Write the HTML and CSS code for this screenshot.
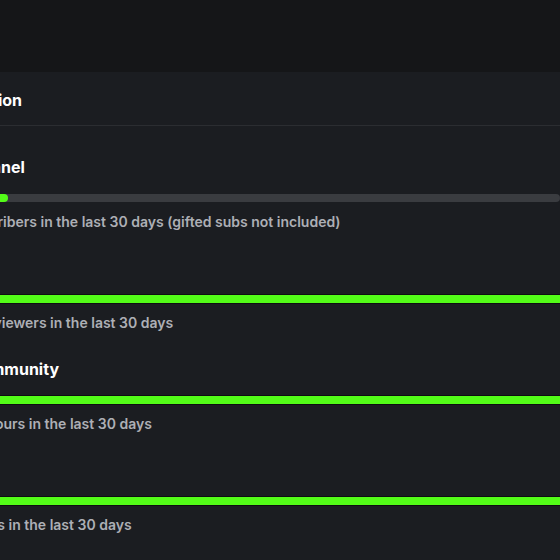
FILE: index.html
```html
<!DOCTYPE html>
<html>
<head>
<meta charset="utf-8">
<link rel="stylesheet" href="styles.css">
</head>
<body>
<div class="topbar"></div>
<div class="card">
  <div class="card-header"><h2 class="title">Page Verification</h2></div>
  <div class="sections">
    <div class="section">
      <h3 class="heading">Grow the channel</h3>
      <div class="track"><div class="fill" style="width:17.8%"></div></div>
      <p class="desc">Obtain 75 subscribers in the last 30 days (gifted subs not included)</p>
    </div>
    <div class="section">
      <h3 class="heading">Views</h3>
      <div class="track"><div class="fill full" style="width:100%"></div></div>
      <p class="desc">Get 75 average viewers in the last 30 days</p>
    </div>
    <div class="section">
      <h3 class="heading">Build your community</h3>
      <div class="track"><div class="fill full" style="width:100%"></div></div>
      <p class="desc">Hit 600 watch hours in the last 30 days</p>
    </div>
    <div class="section">
      <h3 class="heading">Streams</h3>
      <div class="track"><div class="fill full" style="width:100%"></div></div>
      <p class="desc">8 unique streams in the last 30 days</p>
    </div>
  </div>
</div>
</body>
</html>
```
FILE: styles.css
```css
html, body {
  margin: 0;
  padding: 0;
  background: #1b1d21;
  font-family: Inter, "Noto Sans", sans-serif;
  overflow: hidden;
}
.topbar {
  height: 72px;
  background: #151618;
}
.card {
  margin-left: -112px;
  background: #1b1d21;
}
.card-header {
  height: 54px;
  display: flex;
  align-items: center;
  padding-top: 2px;
  box-sizing: border-box;
  border-bottom: 1px solid #2b2d31;
}
.title {
  margin: 0;
  font-size: 16px;
  font-weight: 700;
  line-height: 24px;
  color: #ffffff;
}
.sections {
  padding-top: 29px;
  display: flex;
  flex-direction: column;
  gap: 24px;
}
.section {
  display: flex;
  flex-direction: column;
}
.heading {
  margin: 0;
  height: 24px;
  font-size: 16px;
  font-weight: 700;
  line-height: 24px;
  color: #ffffff;
}
.track {
  margin-top: 15px;
  height: 8px;
  background: #3a3c40;
  border-radius: 4px;
}
.fill {
  height: 8px;
  background: #53fc18;
  border-radius: 4px;
}
.fill.full {
  border-radius: 0;
  box-shadow: 0 0 0 1px #0d0e10;
}
.desc {
  margin: 10px 0 0;
  font-size: 14px;
  line-height: 20px;
  font-weight: 600;
  color: #adafb5;
}
```
